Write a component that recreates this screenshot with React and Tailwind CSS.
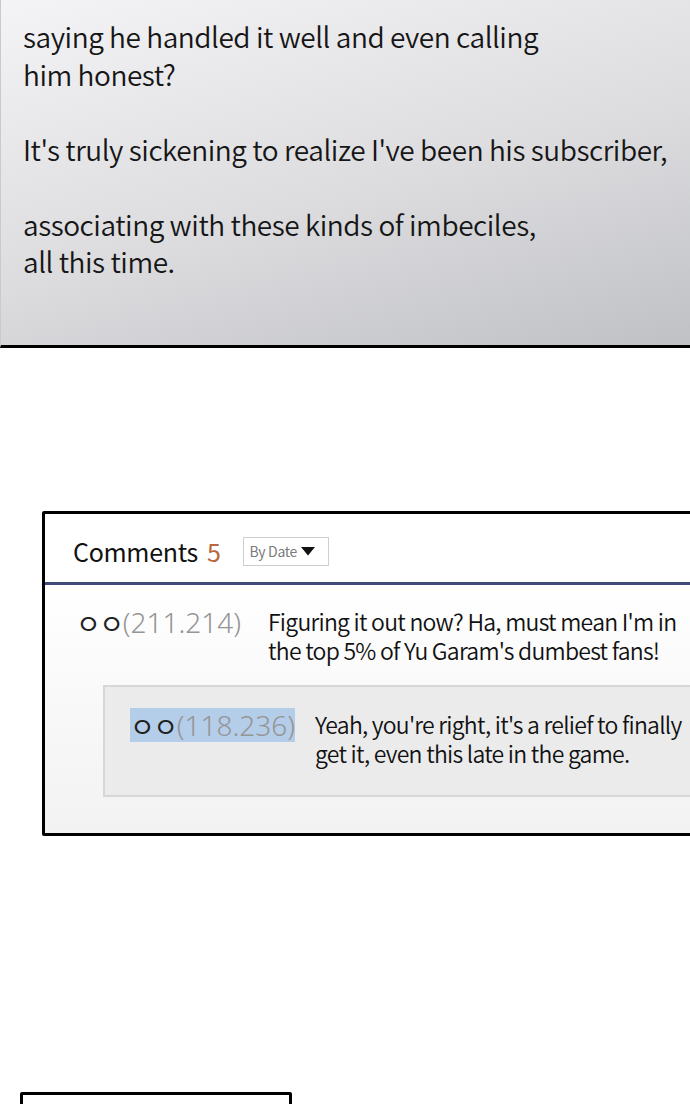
import React from 'react';

const sans = { fontFamily: '"Noto Sans CJK KR", "Noto Sans", sans-serif' };

const Comment = ({ id, lines, highlighted, gap }) => (
  <div className="flex items-start">
    <div className={`flex items-center h-[34px] ${highlighted ? 'bg-[#b4cde9]' : ''}`}>
      <span className="text-[27px] text-[#222] leading-none tracking-[-1.5px]" style={sans}>ㅇㅇ</span>
      <span className="text-[28px] text-[#959595] font-light leading-none" style={{ fontFamily: '"Noto Sans", sans-serif' }}>
        ({id})
      </span>
    </div>
    <p className={`${gap} text-[23px] font-[350] leading-[29px] tracking-[-0.75px] text-[#111] pt-[2px] whitespace-nowrap`} style={sans}>
      {lines.map((l, i) => (
        <React.Fragment key={i}>
          {l}
          {i < lines.length - 1 && <br />}
        </React.Fragment>
      ))}
    </p>
  </div>
);

export default function App() {
  return (
    <div className="w-[690px] h-[1104px] overflow-hidden bg-white">
      {/* dialogue panel */}
      <div className="h-[348px] border-b-[3px] border-black border-l border-l-[#cacacc] bg-[linear-gradient(165deg,#f4f4f6_0%,#dcdcdf_55%,#c0c1c5_100%)]">
        <p className="pl-[22px] pt-[18px] text-[28px] font-[350] leading-[37.5px] tracking-[-0.45px] text-[#161616] whitespace-nowrap" style={sans}>
          saying he handled it well and even calling
          <br />
          him honest?
          <br />
          <br />
          It's truly sickening to realize I've been his subscriber,
          <br />
          <br />
          associating with these kinds of imbeciles,
          <br />
          all this time.
        </p>
      </div>

      {/* comments box */}
      <div className="mt-[163px] ml-[42px] w-[700px] h-[325px] border-[3px] border-black rounded-[2px] flex flex-col">
        <div className="h-[68px] bg-white flex items-center pl-[28px] pt-[7px]">
          <span className="text-[25px] text-[#111] tracking-[-0.3px]" style={sans}>
            Comments<span className="ml-[9px] text-[#b8683c]">5</span>
          </span>
          <div className="ml-[22px] h-[29px] w-[86px] border border-[#cfcfcf] flex items-center pl-[6px] gap-[4px]">
            <span className="text-[14px] text-[#7a7a7a] tracking-[-0.3px]" style={sans}>By Date</span>
            <svg width="14" height="9" viewBox="0 0 14 9">
              <path d="M0 0 H14 L7 8.5 Z" fill="#111" />
            </svg>
          </div>
        </div>
        <div className="h-[3px] bg-[#3f4a78]" />
        <div className="flex-1 bg-[linear-gradient(180deg,#ffffff_0%,#f2f2f3_100%)] pt-[20px]">
          <div className="pl-[31px]">
            <Comment gap="ml-[27px]" id="211.214" lines={["Figuring it out now? Ha, must mean I'm in", "the top 5% of Yu Garam's dumbest fans!"]} />
          </div>
          <div className="mt-[20px] ml-[58px] h-[112px] bg-[#ebebec] border-2 border-[#d7d7d8] pl-[25px] pt-[21px]">
            <Comment gap="ml-[20px]" highlighted id="118.236" lines={["Yeah, you're right, it's a relief to finally", "get it, even this late in the game."]} />
          </div>
        </div>
      </div>

      {/* next panel */}
      <div className="mt-[256px] ml-[20px] w-[272px] h-[40px] border-[3px] border-black rounded-[2px]" />
    </div>
  );
}
